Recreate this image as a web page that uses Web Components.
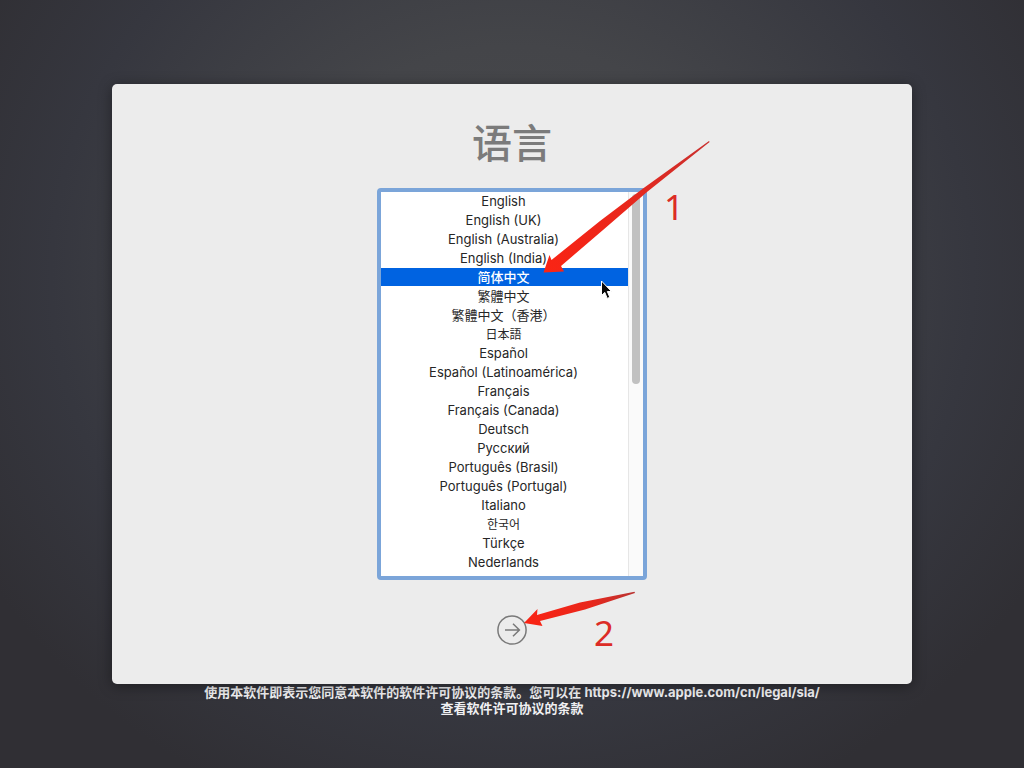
<!DOCTYPE html>
<html lang="zh-CN">
<head>
<meta charset="utf-8">
<meta name="viewport" content="width=device-width, initial-scale=1">
<title>语言</title>
<style>
html, body { margin: 0; }
body { font-family: Inter, "Noto Sans CJK SC", sans-serif; }
</style>
</head>
<body>
<setup-screen>
  <setup-panel heading="语言">
    <language-list></language-list>
    <continue-button slot="action"></continue-button>
    <step-guide slot="guide"></step-guide>
  </setup-panel>
  <license-note slot="footer"></license-note>
</setup-screen>
<script>
class ShadowElement extends HTMLElement {
  constructor() {
    super();
    this.attachShadow({ mode: "open" }).innerHTML = this.render();
  }
}

customElements.define("setup-screen", class extends ShadowElement {
  render() {
    return `<style>
      :host { display: flex; flex-direction: column; box-sizing: border-box; min-height: 100vh;
        padding: 84px 112px 50px;
        background: radial-gradient(ellipse 60% 75% at 50% 36%, #4a4b4d 0%, #444549 40%, #36373f 75%, #302f34 100%); }
      main { display: block; }
    </style>
    <main><slot></slot></main><slot name="footer"></slot>`;
  }
});

customElements.define("setup-panel", class extends ShadowElement {
  render() {
    return `<style>
      :host { display: flex; flex-direction: column; align-items: center; position: relative;
        padding: 32px 0 39px; border-radius: 5px; background: #ececec;
        box-shadow: 0 2px 14px rgba(0,0,0,.4); }
      h1 { margin: 0 0 22px; font: 500 40px/50px "Noto Sans CJK SC", sans-serif; color: #7b7b7b; }
      slot[name=action] { display: block; margin-top: 35px; }
    </style>
    <h1></h1><slot></slot><slot name="action"></slot><slot name="guide"></slot>`;
  }
  connectedCallback() {
    this.shadowRoot.querySelector("h1").textContent = this.getAttribute("heading");
  }
});

customElements.define("language-list", class extends ShadowElement {
  render() {
    const languages = [
      ["English", "en"], ["English (UK)", "en-GB"], ["English (Australia)", "en-AU"], ["English (India)", "en-IN"],
      ["简体中文", "zh-CN"], ["繁體中文", "zh-TW"], ["繁體中文（香港）", "zh-HK"], ["日本語", "ja"],
      ["Español", "es"], ["Español (Latinoamérica)", "es-419"], ["Français", "fr"], ["Français (Canada)", "fr-CA"],
      ["Deutsch", "de"], ["Русский", "ru"], ["Português (Brasil)", "pt-BR"], ["Português (Portugal)", "pt-PT"],
      ["Italiano", "it"], ["한국어", "ko"], ["Türkçe", "tr"], ["Nederlands", "nl"]
    ];
    const rows = languages.map(([name, code]) =>
      `<label lang="${code}"><input type="radio" name="language" value="${code}"${code === "zh-CN" ? " checked" : ""}><span>${name}</span></label>`).join("");
    return `<style>
      :host { display: grid; grid-template-columns: 1fr 15px; box-sizing: border-box; width: 270px;
        border: 4px solid #7ba5d9; border-radius: 4px; background: #fff; }
      fieldset { margin: 0; padding: 0 0 4px; border: 0; min-width: 0; }
      label { display: block; position: relative; box-sizing: border-box; height: 19px; padding-right: 2px;
        border-bottom: 1px solid #fff; text-align: center;
        font-size: 13px; line-height: 19px; color: #262626; white-space: nowrap; }
      label:lang(zh), label:lang(ja), label:lang(ko) { line-height: 18px; }
      :lang(zh-TW), :lang(zh-HK) { font-family: "Noto Sans CJK TC", sans-serif; }
      :lang(ja) { font-family: "Noto Sans CJK JP", sans-serif; font-size: 12px; }
      :lang(ko) { font-family: "Noto Sans CJK KR", sans-serif; font-size: 12px; }
      input { position: absolute; inset: 0; margin: 0; width: 100%; height: 100%; opacity: 0; }
      label:has(:checked) { background: #0063e1; color: #fff; font-weight: 500; }
      .track { padding: 2px 3px; border-left: 1px solid #e6e6e6; background: #fafafa; }
      .thumb { width: 8px; height: 50%; border-radius: 4px; background: #c1c1c1; }
    </style>
    <fieldset aria-label="语言">${rows}</fieldset>
    <div class="track"><div class="thumb"></div></div>`;
  }
});

customElements.define("continue-button", class extends ShadowElement {
  render() {
    return `<style>
      :host { display: block; }
      button { display: block; width: 30px; height: 30px; padding: 0; border: 0; background: none; }
      svg { display: block; }
    </style>
    <button type="button" aria-label="继续"><svg width="30" height="30" viewBox="0 0 30 30" fill="none" stroke="#797979" stroke-width="1.5">
      <circle cx="15" cy="15" r="14.1"/><path d="M8 15H22.2M16 8.8L22.4 15L16 21.2"/></svg></button>`;
  }
});

customElements.define("step-guide", class extends ShadowElement {
  render() {
    return `<style>
      :host { position: absolute; top: 46px; left: calc(50% - 22px); pointer-events: none; }
      svg { display: block; }
      text { font: 400 35px "Noto Sans", sans-serif; fill: #dc2c26; }
    </style>
    <svg width="230" height="530" viewBox="490 130 230 530">
      <defs>
        <linearGradient id="long" gradientUnits="userSpaceOnUse" x1="544" y1="272" x2="709" y2="141">
          <stop offset="0" stop-color="#fa2414"/><stop offset=".5" stop-color="#e9271c"/><stop offset="1" stop-color="#c9302e"/>
        </linearGradient>
        <linearGradient id="short" gradientUnits="userSpaceOnUse" x1="524" y1="623" x2="635" y2="592">
          <stop offset="0" stop-color="#fa2414"/><stop offset=".6" stop-color="#e9271c"/><stop offset="1" stop-color="#b93432"/>
        </linearGradient>
      </defs>
      <path fill="url(#long)" d="M543.5 272.5L549.5 255L551.5 260L600 221L643 188.5L709 141L709.6 142L647 192L603 230L561 266L564 271.5Z"/>
      <path fill="url(#short)" d="M524 623L537.5 609L537 615L580 602.5L634.5 591.8L635 593L585 609.5L540 621L542.5 626Z"/>
      <path fill="#080808" stroke="#fff" stroke-width="1" stroke-linejoin="round" d="M601.5 281V295.5L604.8 292.4L607.2 298.4L609.8 297.3L607.3 291.5H611.5Z"/>
      <text x="664" y="220">1</text>
      <text x="594" y="646">2</text>
    </svg>`;
  }
});

customElements.define("license-note", class extends ShadowElement {
  render() {
    return `<style>
      :host { display: block; }
      p { margin: 0; text-align: center; font-size: 13px; font-weight: 600; line-height: 16px; color: #f0f0f2; }
      a { color: inherit; text-decoration: none; font-weight: 700; }
    </style>
    <p>使用本软件即表示您同意本软件的软件许可协议的条款。您可以在 <a href="https://www.apple.com/cn/legal/sla/">https://www.apple.com/cn/legal/sla/</a><br>查看软件许可协议的条款</p>`;
  }
});
</script>
</body>
</html>
